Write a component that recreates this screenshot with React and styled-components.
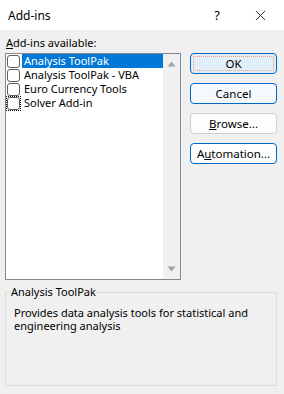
import styled, { createGlobalStyle } from 'styled-components';

const GlobalStyle = createGlobalStyle`
  html, body {
    margin: 0;
    padding: 0;
    background: #ffffff;
  }
  body {
    font-family: "Noto Sans", "Open Sans", sans-serif;
    font-size: 11px;
    color: #000;
  }
`;

const addins = ['Analysis ToolPak', 'Analysis ToolPak - VBA', 'Euro Currency Tools', 'Solver Add-in'];

const App = () => {
  return (
    <Window>
      <GlobalStyle />
      <TitleBar>
        <Title>Add-ins</Title>
        <TitleButtons>
          <HelpGlyph>?</HelpGlyph>
          <CloseIcon viewBox="0 0 12 12">
            <path d="M1 1 L11 11 M11 1 L1 11" stroke="#1a1a1a" strokeWidth="1" fill="none" />
          </CloseIcon>
        </TitleButtons>
      </TitleBar>
      <Body>
        <Main>
          <ListColumn>
            <Label>
              <u>A</u>dd-ins available:
            </Label>
            <ListBox>
              <Items>
                {addins.map((name, i) => (
                  <Item key={name}>
                    <CheckWrap $focused={i === 3}>
                      <Check />
                    </CheckWrap>
                    <ItemText $selected={i === 0}>{name}</ItemText>
                  </Item>
                ))}
              </Items>
              <ScrollBar>
                <Arrow viewBox="0 0 9 6">
                  <path d="M0.5 5.5 L4.5 0.5 L8.5 5.5 Z" fill="#a3a3a3" />
                </Arrow>
                <Arrow viewBox="0 0 9 6">
                  <path d="M0.5 0.5 L4.5 5.5 L8.5 0.5 Z" fill="#a3a3a3" />
                </Arrow>
              </ScrollBar>
            </ListBox>
          </ListColumn>
          <Buttons>
            <Button $variant="default">
              <Focus>OK</Focus>
            </Button>
            <Button $variant="blue">Cancel</Button>
            <Button $variant="plain">
              <u>B</u>rowse...
            </Button>
            <Button $variant="white">
              A<u>u</u>tomation...
            </Button>
          </Buttons>
        </Main>
        <Group>
          <Legend>Analysis ToolPak</Legend>
          <Description>Provides data analysis tools for statistical and engineering analysis</Description>
        </Group>
      </Body>
    </Window>
  );
};

const Window = styled.div`
  width: 284px;
  height: 394px;
  display: flex;
  flex-direction: column;
  overflow: hidden;
`;

const TitleBar = styled.div`
  height: 30px;
  background: #ffffff;
  display: flex;
  align-items: center;
  justify-content: space-between;
  padding-left: 8px;
  box-sizing: border-box;
`;

const Title = styled.div`
  font-size: 12px;
`;

const TitleButtons = styled.div`
  display: flex;
  align-items: center;
  gap: 35px;
  padding-right: 18px;
`;

const HelpGlyph = styled.span`
  font-size: 13px;
`;

const CloseIcon = styled.svg`
  width: 11px;
  height: 11px;
`;

const Body = styled.div`
  flex: 1;
  background: #f0f0f0;
  padding: 5px 7px 8px 5px;
  display: flex;
  flex-direction: column;
  gap: 5px;
`;

const Main = styled.div`
  display: flex;
  gap: 9px;
`;

const ListColumn = styled.div`
  display: flex;
  flex-direction: column;
  gap: 2px;
`;

const Label = styled.div`
  height: 16px;
  line-height: 16px;
  padding-left: 1px;
`;

const ListBox = styled.div`
  width: 176px;
  height: 227px;
  box-sizing: border-box;
  border: 1px solid #828790;
  background: #ffffff;
  display: flex;
`;

const Items = styled.div`
  flex: 1;
  display: flex;
  flex-direction: column;
`;

const Item = styled.div`
  height: 14px;
  display: flex;
  align-items: center;
`;

const CheckWrap = styled.div`
  width: 15px;
  height: 15px;
  box-sizing: border-box;
  display: flex;
  align-items: center;
  justify-content: center;
  outline: ${(p) => (p.$focused ? '1px dotted #000' : 'none')};
  outline-offset: -1px;
`;

const Check = styled.div`
  width: 13px;
  height: 13px;
  box-sizing: border-box;
  border: 1px solid #5c5c5c;
  border-radius: 3px;
  background: #ffffff;
`;

const ItemText = styled.div`
  flex: 1;
  margin-left: 1px;
  height: 14px;
  line-height: 14px;
  padding-left: 2px;
  background: ${(p) => (p.$selected ? '#0078d7' : 'transparent')};
  color: ${(p) => (p.$selected ? '#ffffff' : '#000000')};
  white-space: nowrap;
`;

const ScrollBar = styled.div`
  width: 17px;
  background: #f0f0f0;
  display: flex;
  flex-direction: column;
  justify-content: space-between;
  align-items: center;
  padding: 7px 0 7px;
`;

const Arrow = styled.svg`
  width: 9px;
  height: 6px;
`;

const Buttons = styled.div`
  display: flex;
  flex-direction: column;
  gap: 9px;
  padding-top: 18px;
`;

const buttonColors = {
  default: { bg: '#e0eef9', border: '#0067c0' },
  blue: { bg: '#f5f9fd', border: '#0067c0' },
  plain: { bg: '#fdfdfd', border: '#d0d0d0' },
  white: { bg: '#fdfdfd', border: '#0067c0' },
};

const Button = styled.div`
  width: 87px;
  height: 21px;
  box-sizing: border-box;
  border: 1px solid ${(p) => buttonColors[p.$variant].border};
  background: ${(p) => buttonColors[p.$variant].bg};
  border-radius: 4px;
  display: flex;
  align-items: center;
  justify-content: center;
  padding: 2px;
  font-size: 11.5px;
`;

const Focus = styled.div`
  align-self: stretch;
  flex: 1;
  display: flex;
  align-items: center;
  justify-content: center;
  border: 1px dotted #f0a070;
  border-radius: 1px;
`;

const Group = styled.fieldset`
  margin: 0;
  padding: 0 6px 0 5px;
  border: 1px solid #dcdcdc;
  flex: 1;
  min-width: 0;
`;

const Legend = styled.legend`
  padding: 0;
  line-height: 14px;
`;

const Description = styled.div`
  margin-top: 7px;
  margin-left: 3px;
  line-height: 13px;
`;

export default App;
